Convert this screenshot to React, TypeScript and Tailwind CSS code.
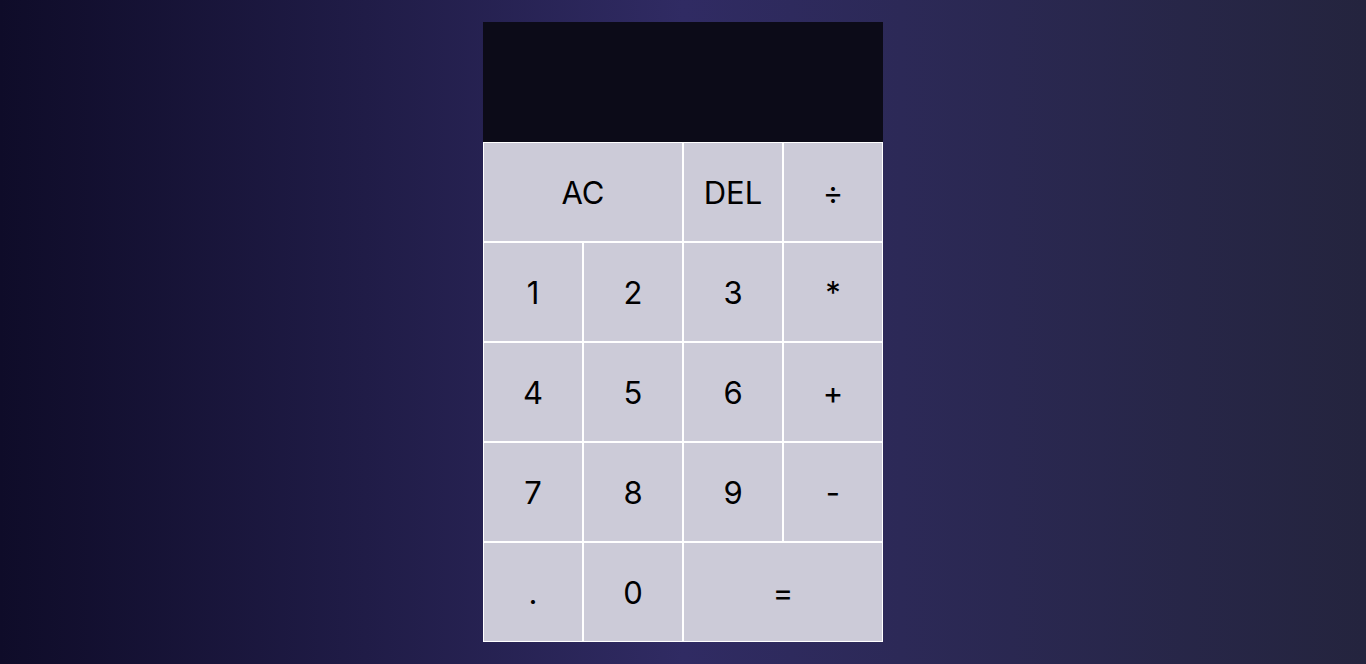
import React from "react";

const keys: { label: string; span?: boolean }[] = [
  { label: "AC", span: true },
  { label: "DEL" },
  { label: "÷" },
  { label: "1" },
  { label: "2" },
  { label: "3" },
  { label: "*" },
  { label: "4" },
  { label: "5" },
  { label: "6" },
  { label: "+" },
  { label: "7" },
  { label: "8" },
  { label: "9" },
  { label: "-" },
  { label: "." },
  { label: "0" },
  { label: "=", span: true },
];

export default function App() {
  return (
    <div
      className="min-h-screen w-full bg-gradient-to-r from-[#0f0c29] via-[#302b63] to-[#24243e] flex justify-center pt-[22px]"
      style={{ fontFamily: "Inter, 'Noto Sans', sans-serif" }}
    >
      <div className="w-[400px] h-[620px] flex flex-col">
        <div className="h-[120px] bg-[#0c0b18]" />
        <div className="grid grid-cols-[repeat(4,100px)] grid-rows-[repeat(5,100px)]">
          {keys.map((k, i) => (
            <button
              key={i}
              className={`bg-[#cccbd8] border border-white text-black text-[31px] flex items-center justify-center pt-[2px] ${
                k.span ? "col-span-2" : ""
              }`}
            >
              {k.label}
            </button>
          ))}
        </div>
      </div>
    </div>
  );
}
